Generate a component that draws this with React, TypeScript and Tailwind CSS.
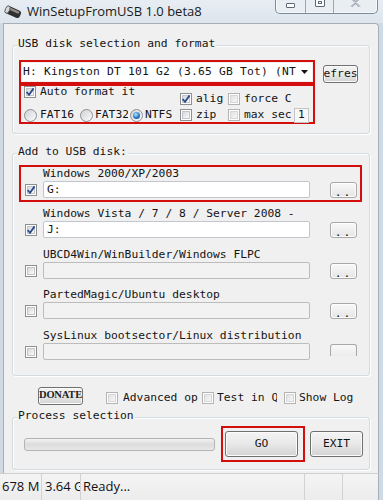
import React from "react";

const M = "font-['DejaVu_Sans_Mono',monospace] text-[11.3px] leading-[14px] text-[#141414] whitespace-nowrap";

function Check({ checked = false, dim = false }: { checked?: boolean; dim?: boolean }) {
  return (
    <span
      className={
        "relative shrink-0 w-[12px] h-[12px] border bg-white flex items-center justify-center " +
        (dim ? "border-[#b3b3b3]" : "border-[#8e8f8f]")
      }
    >
      <span
        className={
          "absolute inset-[1px] border bg-linear-to-br " +
          (dim ? "border-[#d6d6d6] from-[#e2e2e2] to-[#f7f7f7]" : "border-[#c2c6cb] from-[#d4d8dc] to-[#fbfbfb]")
        }
      />
      {checked && (
        <svg className="relative" width="10" height="10" viewBox="0 0 10 10">
          <path d="M1.6 5 L4 7.8 L8.6 1.4" fill="none" stroke="#2c4a8c" strokeWidth="1.8" />
        </svg>
      )}
    </span>
  );
}

function Radio({ on = false }: { on?: boolean }) {
  return (
    <span className="relative shrink-0 w-[13px] h-[13px] rounded-full border border-[#8e8f8f] bg-linear-to-br from-[#cfd3d8] to-[#fbfbfb] flex items-center justify-center">
      {on && (
        <span className="w-[7px] h-[7px] rounded-full bg-[radial-gradient(circle_at_40%_35%,#b9e6ff,#2a78c4_55%,#0c3b78)]" />
      )}
    </span>
  );
}

function Btn({ children, className = "" }: { children?: React.ReactNode; className?: string }) {
  return (
    <div
      className={
        "flex items-center justify-center rounded-[3px] border border-[#707070] bg-linear-to-b from-[#f4f4f4] via-[#e8e8e8] to-[#d3d3d3] shadow-[inset_0_0_0_1px_#fbfbfb] overflow-hidden " +
        className
      }
    >
      {children}
    </div>
  );
}

function Group({ label, className = "", children }: { label: string; className?: string; children?: React.ReactNode }) {
  return (
    <div
      className={
        "relative border border-[#d3dbe1] rounded-[3px] shadow-[inset_1px_1px_0_#ffffff,1px_1px_0_#ffffff] " + className
      }
    >
      <span className={M + " absolute left-[4px] top-[-9px] px-[1px] bg-[#f0f0f0]"}>{label}</span>
      {children}
    </div>
  );
}

const rows = [
  { label: "Windows 2000/XP/2003", value: "G:", checked: true, enabled: true, red: true, mt: "" },
  { label: "Windows Vista / 7 / 8 / Server 2008 -", value: "J:", checked: true, enabled: true, red: false, mt: "mt-[3px]" },
  { label: "UBCD4Win/WinBuilder/Windows FLPC", value: "", checked: false, enabled: false, red: false, mt: "mt-[4px]" },
  { label: "PartedMagic/Ubuntu desktop", value: "", checked: false, enabled: false, red: false, mt: "mt-[3px]" },
  { label: "SysLinux bootsector/Linux distribution", value: "", checked: false, enabled: false, red: false, mt: "mt-[4px]", clip: true },
];

export default function App() {
  return (
    <div className="w-[383px] h-[500px] overflow-hidden flex flex-col bg-[#d6e0ea]">
      {/* Title bar */}
      <div className="h-[23px] shrink-0 flex items-center bg-linear-to-b from-[#e7edf3] to-[#dde5ed]">
        <svg className="ml-[3px] shrink-0" width="20" height="16" viewBox="0 0 20 16">
          <g transform="rotate(24 10 8)">
            <rect x="3" y="4" width="15" height="8" rx="3" fill="#2f2f2f" />
            <rect x="5" y="5" width="11" height="2.5" rx="1.2" fill="#8a8a8a" />
            <ellipse cx="4" cy="8" rx="2.2" ry="4" fill="#d8d8d8" stroke="#4a4a4a" strokeWidth="0.8" />
          </g>
        </svg>
        <span className="ml-[4px] font-['Open_Sans',sans-serif] text-[13px] text-[#1a1a1a] whitespace-nowrap">
          WinSetupFromUSB 1.0 beta8
        </span>
        <div className="ml-auto mr-[5px] self-start mt-[-4px] h-[18px] flex border border-t-0 border-[#7f8b9a] rounded-b-[5px] bg-[#e9eef3] overflow-hidden shadow-[inset_0_0_0_1px_#f6f9fb]">
          <div className="w-[30px] border-r border-[#9aa6b3] flex justify-center">
            <span className="mt-[7px] w-[9px] h-[5px] border border-[#5b6878] rounded-[1px] bg-white" />
          </div>
          <div className="w-[28px] border-r border-[#9aa6b3] flex justify-center">
            <span className="mt-[2px] w-[10px] h-[9px] border border-[#5b6878] rounded-[1px] bg-white flex items-center justify-center">
              <span className="w-[4px] h-[3px] border border-[#5b6878]" />
            </span>
          </div>
          <div className="w-[43px] flex justify-center">
            <svg className="mt-[2px]" width="11" height="9" viewBox="0 0 11 9">
              <path d="M1 0 L5.5 4 L10 0 M1 9 L5.5 5 L10 9" fill="none" stroke="#7d8896" strokeWidth="1.6" />
              <path d="M1 0 L5.5 4 L10 0 M1 9 L5.5 5 L10 9" fill="none" stroke="#ffffff" strokeWidth="0.6" />
            </svg>
          </div>
        </div>
      </div>

      {/* Middle */}
      <div className="h-[450px] shrink-0 flex">
        <div className="w-[3px] bg-[#cfdae5]" />
        <div className="w-[376px] bg-[#f0f0f0] border-l border-t border-r border-[#a4afba] rounded-tr-[4px] flex flex-col">
          {/* Group 1 */}
          <Group label="USB disk selection and format" className="ml-[8px] mt-[21px] w-[358px] h-[89px] pt-[14px] pl-[6px]">
            <div className="flex items-start">
              <div className="w-[296px] flex flex-col">
                <div className="h-[24px] border-2 border-[#d40d0d] p-px flex">
                  <div className="flex-1 h-[18px] bg-white flex items-center pl-px pr-[4px] overflow-hidden">
                    <span className={M + " tracking-[0.2px] overflow-hidden w-[273px]"}>
                      H: Kingston DT 101 G2 (3.65 GB Tot) (NT
                    </span>
                    <svg className="ml-auto shrink-0" width="7" height="4" viewBox="0 0 7 4">
                      <path d="M0 0 H7 L3.5 4 Z" fill="#111" />
                    </svg>
                  </div>
                </div>
                <div className="h-[40px] border-2 border-[#d40d0d] flex pl-[3px]">
                  <div className="w-[156px] flex flex-col">
                    <div className="h-[14px] flex items-center mt-[-1px]">
                      <Check checked />
                      <span className={M + " ml-[4px]"}>Auto format it</span>
                    </div>
                    <div className="h-[14px] mt-[9px] flex items-center">
                      <div className="w-[56px] flex items-center overflow-hidden">
                        <Radio />
                        <span className={M + " ml-[3px] w-[37px] overflow-hidden"}>FAT16</span>
                      </div>
                      <div className="w-[50px] flex items-center overflow-hidden">
                        <Radio />
                        <span className={M + " ml-[2px] w-[33px] overflow-hidden"}>FAT32</span>
                      </div>
                      <div className="w-[48px] flex items-center overflow-hidden">
                        <Radio on />
                        <span className={M + " ml-[2px] w-[30px] overflow-hidden"}>NTFS</span>
                      </div>
                    </div>
                  </div>
                  <div className="flex flex-col">
                    <div className="h-[14px] mt-[6px] flex items-center">
                      <div className="w-[48px] flex items-center overflow-hidden">
                        <Check checked />
                        <span className={M + " ml-[4px] w-[28px] overflow-hidden"}>align</span>
                      </div>
                      <div className="flex items-center">
                        <Check dim />
                        <span className={M + " ml-[4px] w-[47px] overflow-hidden"}>force C</span>
                      </div>
                    </div>
                    <div className="h-[14px] mt-[2px] flex items-center">
                      <div className="w-[48px] flex items-center overflow-hidden">
                        <Check />
                        <span className={M + " ml-[4px] w-[24px] overflow-hidden"}>zip</span>
                      </div>
                      <div className="flex items-center">
                        <Check dim />
                        <span className={M + " ml-[4px] w-[47px] overflow-hidden"}>max sec</span>
                        <div className="ml-[3px] w-[15px] h-[15px] border border-[#c4c4c4] bg-[#f7f7f7] flex items-center justify-center">
                          <span className={M + " text-[#8a8a8a]"}>1</span>
                        </div>
                      </div>
                    </div>
                  </div>
                </div>
              </div>
              <Btn className="ml-[8px] mt-[5px] w-[35px] h-[18px] border-[#8a8a8a]">
                <span className={M}>efres</span>
              </Btn>
            </div>
          </Group>

          {/* Group 2 */}
          <Group label="Add to USB disk:" className="ml-[8px] mt-[19px] w-[358px] h-[223px] pt-[11px] pl-[6px]">
            {rows.map((r) => (
              <div
                key={r.label}
                className={"w-[343px] h-[37px] border-2 " + (r.red ? "border-[#d40d0d] " : "border-transparent ") + r.mt}
              >
                <div className={M + " h-[14px] pl-[22px]"}>{r.label}</div>
                <div className="h-[17px] flex items-center pl-[4px]">
                  <Check checked={r.checked} />
                  <div
                    className={
                      "ml-[6px] w-[267px] h-[17px] border flex items-center pl-[3px] rounded-[2px] " +
                      (r.enabled ? "bg-white border-[#c3c6cc]" : "bg-[#f2f2f2] border-[#bcbcbc]")
                    }
                  >
                    <span className={M}>{r.value}</span>
                  </div>
                  {r.clip ? (
                    <div className="ml-[20px] self-start mt-[1px] w-[27px] h-[12px] border border-b-0 border-[#a8a8a8] rounded-t-[3px] bg-linear-to-b from-[#f8f8f8] to-[#ececec] flex justify-center overflow-hidden">
                      <span className={M + " text-[10px] leading-[10px] mt-[4px] tracking-[2px]"}>..</span>
                    </div>
                  ) : (
                    <div className="ml-[20px] w-[27px] h-[16px] border border-[#a8a8a8] rounded-[3px] bg-linear-to-b from-[#f8f8f8] to-[#e6e6e6] shadow-[inset_0_0_0_1px_#fdfdfd] flex justify-center">
                      <span className={M + " text-[10px] leading-[10px] mt-[3px] tracking-[2px]"}>..</span>
                    </div>
                  )}
                </div>
              </div>
            ))}
          </Group>

          {/* Bottom controls */}
          <div className="mt-[11px] h-[18px] flex items-center">
            <Btn className="ml-[34px] w-[45px] h-[18px] border-[#8a8a8a] items-start">
              <span className="font-['Liberation_Serif',serif] font-bold text-[10.5px] leading-[14px] text-[#222] tracking-[-0.2px]">
                DONATE
              </span>
            </Btn>
            <div className="ml-[23px] mt-[4px] w-[96px] flex items-center overflow-hidden">
              <Check dim />
              <span className={M + " ml-[5px] w-[76px] overflow-hidden"}>Advanced op</span>
            </div>
            <div className="mt-[4px] w-[82px] flex items-center overflow-hidden">
              <Check dim />
              <span className={M + " ml-[3px] w-[60px] overflow-hidden"}>Test in Q</span>
            </div>
            <div className="mt-[3px] flex items-center">
              <Check dim />
              <span className={M + " ml-[3px]"}>Show Log</span>
            </div>
          </div>

          {/* Group 3 */}
          <Group label="Process selection" className="ml-[8px] mt-[12px] w-[358px] h-[53px] pt-[8px] pl-[11px]">
            <div className="h-[36px] flex items-center">
              <div className="w-[191px] h-[13px] rounded-[3px] border border-[#b4b4b4] bg-linear-to-b from-[#f2f2f2] via-[#dcdcdc] to-[#e8e8e8]" />
              <div className="ml-[6px] w-[84px] h-[36px] border-2 border-[#d40d0d] flex items-center pl-[2px]">
                <Btn className="w-[73px] h-[26px]">
                  <span className={M}>GO</span>
                </Btn>
              </div>
              <Btn className="ml-[5px] w-[53px] h-[26px]">
                <span className={M}>EXIT</span>
              </Btn>
            </div>
          </Group>
        </div>
        <div className="flex-1 bg-[#cfdae5]" />
      </div>

      {/* Status bar */}
      <div className="h-[27px] shrink-0 flex">
        <div className="w-[379px] flex bg-linear-to-b from-[#f4f4f4] to-[#ececec] border-t border-[#cfcfcf] border-r border-r-[#a4afba] font-['Open_Sans',sans-serif] text-[13px] text-[#111] whitespace-nowrap">
          <div className="w-[42px] pl-[2px] overflow-hidden border-r border-[#d2d2d2] flex items-center">678 M</div>
          <div className="w-[39px] pl-[3px] overflow-hidden border-r border-[#d2d2d2] flex items-center">3.64 G</div>
          <div className="w-[224px] pl-[2px] overflow-hidden border-r border-[#d2d2d2] flex items-center">Ready...</div>
          <div className="w-[38px] border-r border-[#d2d2d2]" />
          <div className="flex-1" />
        </div>
        <div className="flex-1 bg-[#cfdae5]" />
      </div>
    </div>
  );
}
